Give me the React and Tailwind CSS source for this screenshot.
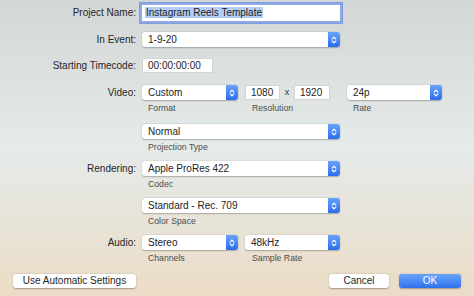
import React from "react";

const Stepper = () => (
  <span className="flex w-[12px] shrink-0 items-center justify-center rounded-r-[3px] bg-linear-to-b from-[#67a3fa] to-[#2c6cef]">
    <svg width="6" height="10" viewBox="0 0 6 10">
      <path
        d="M1.2 4 L3 2.2 L4.8 4 M1.2 6 L3 7.8 L4.8 6"
        stroke="white"
        strokeWidth="1.1"
        fill="none"
        strokeLinecap="round"
        strokeLinejoin="round"
      />
    </svg>
  </span>
);

const Popup = ({ value, width }) => (
  <div
    className={`flex h-[15px] items-stretch rounded-[3px] bg-white shadow-[0_0.5px_1.5px_rgba(0,0,0,0.28)] ${width}`}
  >
    <span className="flex-1 truncate pl-[6px] text-[10px] leading-[15px] text-[#232323]">
      {value}
    </span>
    <Stepper />
  </div>
);

const Field = ({ value, width }) => (
  <div
    className={`h-[15px] border border-[#d4d4d4] bg-white pl-[5px] text-[10px] leading-[13px] text-[#232323] ${width}`}
  >
    {value}
  </div>
);

const Row = ({ label, children, className = "" }) => (
  <div className={`flex h-[15px] items-center ${className}`}>
    <div className="w-[136px] text-right text-[10px] leading-[15px] text-[#262626]">
      {label}
    </div>
    <div className="ml-[6px] flex items-center">{children}</div>
  </div>
);

const Sub = ({ children, width = "" }) => (
  <span className={`text-[8.7px] leading-[12px] text-[#4d4d4d] ${width}`}>{children}</span>
);

const SubRow = ({ children }) => (
  <div className="mt-[2px] flex h-[12px] pl-[148px]">{children}</div>
);

export default function App() {
  return (
    <div
      className="flex h-[296px] w-[474px] flex-col overflow-hidden bg-linear-to-b from-[#d3d6d6] via-[#e5ebea] via-50% to-[#ebdcc6]"
      style={{ fontFamily: '"Liberation Sans", Arial, sans-serif' }}
    >
      <div className="mt-[5px] flex h-[16px] items-center">
        <div className="w-[136px] text-right text-[10px] leading-[16px] text-[#262626]">
          Project Name:
        </div>
        <div className="ml-[6px] h-[16px] w-[198px] bg-white pl-[3px] text-[10px] leading-[16px] text-[#1e1e1e] shadow-[0_0_0_2.5px_#8ea9e6,0_0_0_3px_#6f8fd6]">
          <span className="bg-[#b4cdf4] px-[1px]">Instagram Reels Template</span>
        </div>
      </div>

      <Row label="In Event:" className="mt-[11px]">
        <Popup value="1-9-20" width="w-[198px]" />
      </Row>

      <Row label="Starting Timecode:" className="mt-[11px]">
        <Field value="00:00:00:00" width="w-[71px]" />
      </Row>

      <Row label="Video:" className="mt-[12px]">
        <Popup value="Custom" width="w-[96px]" />
        <div className="ml-[7px]">
          <Field value="1080" width="w-[35px]" />
        </div>
        <span className="w-[14px] text-center text-[9px] leading-[15px] text-[#333]">x</span>
        <Field value="1920" width="w-[36px]" />
        <div className="ml-[17px]">
          <Popup value="24p" width="w-[95px]" />
        </div>
      </Row>
      <SubRow>
        <Sub width="w-[104px]">Format</Sub>
        <Sub width="w-[101px]">Resolution</Sub>
        <Sub>Rate</Sub>
      </SubRow>

      <Row label="" className="mt-[10px]">
        <Popup value="Normal" width="w-[198px]" />
      </Row>
      <SubRow>
        <Sub>Projection Type</Sub>
      </SubRow>

      <Row label="Rendering:" className="mt-[8px]">
        <Popup value="Apple ProRes 422" width="w-[198px]" />
      </Row>
      <SubRow>
        <Sub>Codec</Sub>
      </SubRow>

      <Row label="" className="mt-[8px]">
        <Popup value="Standard - Rec. 709" width="w-[198px]" />
      </Row>
      <SubRow>
        <Sub>Color Space</Sub>
      </SubRow>

      <Row label="Audio:" className="mt-[8px]">
        <Popup value="Stereo" width="w-[96px]" />
        <div className="ml-[7px]">
          <Popup value="48kHz" width="w-[95px]" />
        </div>
      </Row>
      <SubRow>
        <Sub width="w-[104px]">Channels</Sub>
        <Sub>Sample Rate</Sub>
      </SubRow>

      <div className="mt-[10px] flex items-center justify-between px-[13px]">
        <button className="h-[14px] w-[123px] rounded-[3px] bg-white text-[10px] leading-[14px] text-[#262626] shadow-[0_0.5px_1.5px_rgba(0,0,0,0.3)]">
          Use Automatic Settings
        </button>
        <div className="flex gap-[10px]">
          <button className="h-[14px] w-[60px] rounded-[3px] bg-white text-[10px] leading-[14px] text-[#262626] shadow-[0_0.5px_1.5px_rgba(0,0,0,0.3)]">
            Cancel
          </button>
          <button className="h-[14px] w-[62px] rounded-[3px] bg-linear-to-b from-[#6aa6fa] to-[#2f70ee] text-[10px] leading-[14px] text-white shadow-[0_0.5px_1.5px_rgba(0,0,0,0.3)]">
            OK
          </button>
        </div>
      </div>
    </div>
  );
}
